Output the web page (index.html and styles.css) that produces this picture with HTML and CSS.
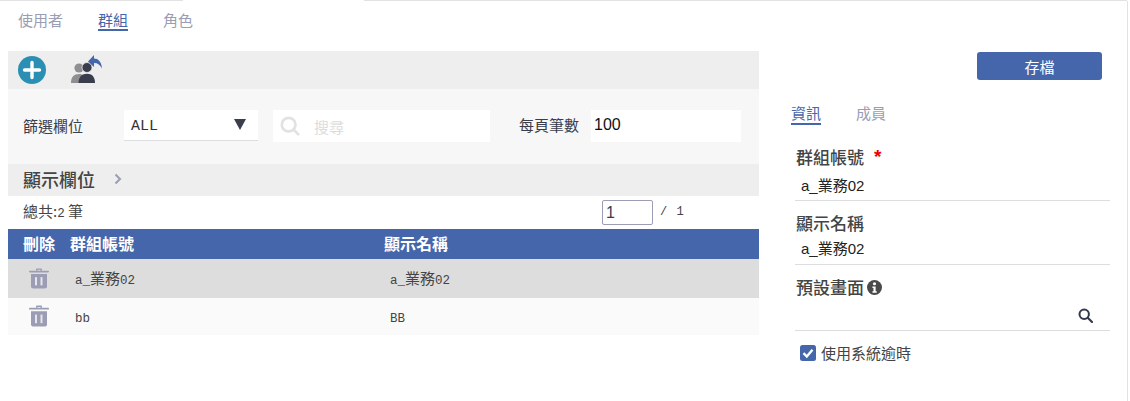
FILE: index.html
```html
<!DOCTYPE html>
<html lang="zh-Hant">
<head>
<meta charset="utf-8">
<title>群組</title>
<link rel="stylesheet" href="styles.css">
</head>
<body>
<div class="topline"><i class="seg-a"></i><i class="seg-b"></i><i class="seg-c"></i></div>
<div class="page">
  <main class="left">
    <nav class="tabs main-tabs">
      <span class="tab">使用者</span>
      <span class="tab active">群組</span>
      <span class="tab">角色</span>
    </nav>
    <div class="toolbar">
      <svg class="ic-add" width="28" height="28" viewBox="0 0 28 28"><circle cx="14" cy="14" r="14" fill="#2b8fb3"/><path d="M14 6.500v15M6.500 14h15" stroke="#fff" stroke-width="3.400" stroke-linecap="round"/></svg>
      <svg class="ic-group" width="32" height="30" viewBox="0 0 32 30"><circle cx="8" cy="14" r="4.600" fill="#8f8f91"/><path d="M0 29c0-6 3-9 8-9 2 0 3 .5 4 1.200-2 1.800-3 4.800-3 7.800z" fill="#8f8f91"/><circle cx="16" cy="13.500" r="5" fill="#3a3d4c" stroke="#eee" stroke-width=".8"/><path d="M7.500 29c0-6 3.500-9.200 8.500-9.200s8 3.200 8 9.200z" fill="#3a3d4c"/><path d="M17 7.500 23 1v3.500c4 0 7.500 3 8 10-1.800-3.500-4-5.500-8-5.500v4z" fill="#4666ab"/></svg>
    </div>
    <div class="filters">
      <label class="flt-label">篩選欄位</label>
      <div class="select"><span class="m all">ALL</span><i class="caret"></i></div>
      <div class="search">
        <svg width="20" height="20" viewBox="0 0 22 22"><circle cx="9.500" cy="9.500" r="7.500" fill="none" stroke="#e2e2e2" stroke-width="3"/><path d="M15 15l5 5" stroke="#e2e2e2" stroke-width="3" stroke-linecap="round"/></svg>
        <span class="placeholder">搜尋</span>
      </div>
      <label class="per-label">每頁筆數</label>
      <div class="per-val">100</div>
    </div>
    <div class="columns-bar">
      <span>顯示欄位</span>
      <svg width="8" height="12" viewBox="0 0 8 12"><path d="M1.500 1.500 6 6l-4.500 4.500" fill="none" stroke="#9a9db3" stroke-width="2"/></svg>
    </div>
    <div class="pager-row">
      <span class="total">總共:<span class="m">2</span> 筆</span>
      <div class="pager">
        <div class="page-input">1</div>
        <span class="page-of m">/ 1</span>
      </div>
    </div>
    <div class="table">
      <div class="row head">
        <div class="c-del">刪除</div>
        <div class="c-acc">群組帳號</div>
        <div class="c-name">顯示名稱</div>
      </div>
      <div class="row r1">
        <div class="c-del"><svg width="20" height="21" viewBox="0 0 20 23" preserveAspectRatio="none"><use href="#trash"/></svg></div>
        <div class="c-acc pad"><span class="m">a_</span>業務<span class="m">02</span></div>
        <div class="c-name pad"><span class="m">a_</span>業務<span class="m">02</span></div>
      </div>
      <div class="row r2">
        <div class="c-del"><svg width="20" height="22" viewBox="0 0 20 23" preserveAspectRatio="none"><use href="#trash"/></svg></div>
        <div class="c-acc pad"><span class="m">bb</span></div>
        <div class="c-name pad"><span class="m">BB</span></div>
      </div>
    </div>
  </main>
  <aside class="right">
    <div class="actions"><button class="save">存檔</button></div>
    <nav class="tabs side-tabs">
      <span class="tab active">資訊</span>
      <span class="tab">成員</span>
    </nav>
    <div class="field f1">
      <div class="f-label">群組帳號<em class="req">*</em></div>
      <div class="f-val">a_業務02</div>
    </div>
    <div class="field f2">
      <div class="f-label">顯示名稱</div>
      <div class="f-val">a_業務02</div>
    </div>
    <div class="field f3">
      <div class="f-label">預設畫面<svg class="info" width="15" height="15" viewBox="0 0 16 16"><circle cx="8" cy="8" r="8" fill="#4a4a4a"/><circle cx="8" cy="4" r="1.700" fill="#fff"/><path d="M5.800 7h3.400v5h1.200v1.500H5.800V12h1.100V8.500H5.800z" fill="#fff"/></svg></div>
      <div class="f-val search-val">
        <svg width="15" height="15" viewBox="0 0 15 15"><circle cx="6.200" cy="6.200" r="4.700" fill="none" stroke="#33384a" stroke-width="2"/><path d="M10 10l4 4" stroke="#33384a" stroke-width="2.200" stroke-linecap="round"/></svg>
      </div>
    </div>
    <div class="check">
      <svg width="16" height="16" viewBox="0 0 16 16"><rect width="16" height="16" rx="2.500" fill="#4666ab"/><path d="M3.500 8.200 6.800 11.500 12.500 4.800" fill="none" stroke="#fff" stroke-width="2.400"/></svg>
      <span class="check-text">使用系統逾時</span>
    </div>
  </aside>
</div>
<svg class="defs" width="0" height="0"><defs><symbol id="trash" viewBox="0 0 20 23"><path d="M7 3V1.800C7 1 7.500.5 8.300.5h3.400c.8 0 1.300.5 1.300 1.300V3h-1.600V2H8.600v1z" fill="#9a9db3"/><rect y="3" width="20" height="1.800" rx=".9" fill="#9a9db3"/><path d="M2 6.500h16V20c0 1.500-1 2.500-2.500 2.500h-11C3 22.500 2 21.500 2 20z" fill="#9a9db3"/><rect x="6" y="10" width="2" height="9" fill="#e6e6e8"/><rect x="11.500" y="10" width="2" height="9" fill="#e6e6e8"/></symbol></defs></svg>
</body>
</html>
```
FILE: styles.css
```css
* { box-sizing: border-box; }
html, body { margin: 0; padding: 0; }
body { width: 1130px; height: 401px; overflow: hidden; background: #fff; color: #3a3d4c; font-family: "Noto Sans CJK TC", "Liberation Sans", sans-serif; font-size: 15px; }
.topline { display: flex; height: 1px; width: 1127px; }
.topline i { display: block; height: 1px; }
.seg-a { width: 183px; background: #e2e2e2; }
.seg-b { width: 181px; background: #fff; }
.seg-c { flex: 1; background: #e2e2e2; }
.page { display: flex; height: 400px; width: 1128px; border-right: 1px solid #e2e2e2; }
.left { width: 751px; margin-left: 8px; flex: none; }
.right { flex: 1; padding-left: 32px; }
.m { font-family: "Liberation Mono", monospace; font-size: 12.500px; }
.defs { position: absolute; }

.tabs { display: flex; }
.tab { color: #9a9db3; border-bottom: 2px solid transparent; }
.tab.active { color: #4666ab; border-bottom-color: #4666ab; }
.main-tabs { height: 50px; padding: 8px 0 0 10px; gap: 35px; align-items: flex-start; }
.main-tabs .tab { height: 22px; line-height: 21px; }

.toolbar { height: 38px; background: #eeeeee; display: flex; align-items: center; padding-left: 10px; gap: 25px; }
.ic-group { margin-top: -2px; }

.filters { height: 75px; background: #f7f7f7; display: flex; align-items: flex-start; padding-top: 21px; }
.flt-label { width: 116px; padding: 5px 0 0 15px; line-height: 22px; }
.select { width: 134px; height: 31px; background: #fff; border-bottom: 1px solid #ddd; display: flex; align-items: center; justify-content: space-between; padding: 0 12px 0 7px; color: #333; }
.all { font-size: 15px; margin-top: 2px; }
.caret { width: 0; height: 0; margin-bottom: 2px; border-left: 6.500px solid transparent; border-right: 6.500px solid transparent; border-top: 11px solid #3a3d4c; }
.search { width: 217px; height: 32px; margin-left: 15px; background: #fff; display: flex; align-items: center; padding-left: 7px; gap: 14px; }
.placeholder { color: #dcdcdc; }
.per-label { width: 101px; padding: 4px 0 0 29px; line-height: 22px; }
.per-val { width: 150px; height: 32px; background: #fff; font-family: "Liberation Sans", sans-serif; font-size: 16px; line-height: 30px; padding-left: 3px; color: #111; }

.columns-bar { height: 32px; background: #eeeeee; display: flex; align-items: center; gap: 19px; padding: 0 0 2px 15px; font-size: 18px; font-weight: 500; color: #444; }

.pager-row { height: 33px; display: flex; align-items: center; justify-content: space-between; padding-left: 15px; }
.total { color: #444; margin-bottom: 4px; }
.pager { display: flex; align-items: center; width: 157px; gap: 7px; }
.page-input { width: 51px; height: 25px; border: 1px solid #9a9db3; border-radius: 2px; font-family: "Liberation Sans", sans-serif; font-size: 16px; line-height: 23px; padding-left: 3px; }
.page-of { color: #444; font-size: 12px; margin-bottom: 1px; word-spacing: 2px; }

.row { display: flex; align-items: center; }
.c-del { width: 47px; flex: none; padding-left: 15px; }
.c-acc { width: 314px; flex: none; }
.c-name { flex: 1; }
.head { height: 30px; padding-bottom: 2px; background: #4666ab; color: #fff; font-weight: 700; font-size: 16px; }
.head .c-acc { width: 314px; margin-left: 15px; }
.r1 { height: 39px; background: #dddddd; }
.r2 { height: 37px; background: #fafafa; }
.row .c-del svg { display: block; margin-left: 6px; }
.pad { color: #444; padding-bottom: 2px; }
.r2 .c-del { padding-bottom: 2px; }
.r1 .c-acc, .r2 .c-acc { margin-left: 20px; width: 315px; }

.actions { height: 79px; padding-top: 51px; }
.save { display: block; margin-left: 186px; width: 125px; height: 28px; border: 0; border-radius: 3px; background: #4666ab; color: #fff; font: inherit; }
.side-tabs { margin-top: 23px; height: 22px; gap: 35px; }
.side-tabs .tab { height: 22px; line-height: 19px; }

.field { margin-left: 4px; width: 315px; }
.f-label { font-size: 17px; line-height: 22px; height: 24px; font-weight: 500; padding-left: 1px; color: #444; display: flex; align-items: flex-start; }
.req { color: #e00; font-family: "Liberation Sans", sans-serif; font-size: 19px; font-style: normal; margin-left: 10px; font-weight: 700; }
.info { margin: 4px 0 0 3px; }
.f-val { border-bottom: 1px solid #ddd; line-height: 22px; padding-left: 6px; font-family: "Liberation Sans", "Noto Sans CJK TC", sans-serif; color: #222; }
.f1 { margin-top: 21px; }
.f1 .f-val { height: 31px; padding-top: 5px; }
.f2 { margin-top: 11px; }
.f2 .f-val { height: 29px; padding-top: 2px; }
.f3 { margin-top: 11px; }
.search-val { height: 31px; display: flex; align-items: center; justify-content: flex-end; padding-right: 17px; }
.check { display: flex; align-items: center; gap: 5px; margin: 14px 0 0 9px; height: 16px; color: #444; }
.check-text { margin-bottom: 1px; }
```
